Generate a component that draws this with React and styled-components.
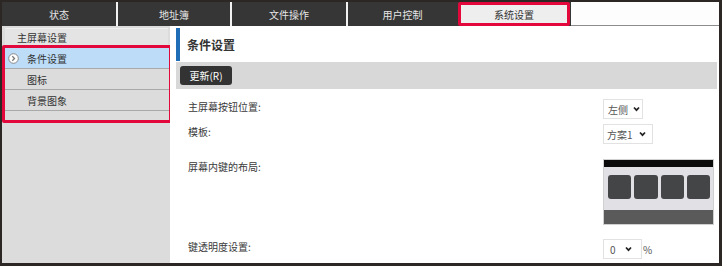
import React from "react";
import styled, { createGlobalStyle } from "styled-components";

const Global = createGlobalStyle`
  html, body { margin: 0; padding: 0; background: #fff; }
  body { font-family: "Noto Sans CJK SC", "Noto Sans", sans-serif; }
  * { box-sizing: border-box; }
`;

const Frame = styled.div`
  width: 722px;
  height: 266px;
  border-style: solid;
  border-color: #2c2725;
  border-width: 2px 3px 3px 2px;
  display: flex;
  flex-direction: column;
  overflow: hidden;
  background: #fff;
`;

const TabBar = styled.div`
  height: 24px;
  display: flex;
  background: #363636;
  flex-shrink: 0;
`;

const Tab = styled.div`
  width: ${(p) => p.$w}px;
  display: flex;
  align-items: center;
  justify-content: center;
  color: #e6e6e6;
  font-size: 10px;
  border-right: ${(p) => (p.$sep ? "2px solid #f2f2f2" : "none")};
`;

const ActiveTab = styled.div`
  width: 112px;
  margin-left: 1px;
  display: flex;
  align-items: center;
  justify-content: center;
  background: #eeeeee;
  color: #333;
  font-size: 10px;
  border: 3px solid #e2083b;
  border-radius: 2px;
`;

const TabFill = styled.div`
  flex: 1;
  background: #fdfdfd;
  border-bottom: 1px solid #8c8c8c;
  margin-left: 1px;
`;

const Body = styled.div`
  flex: 1;
  display: flex;
  min-height: 0;
`;

const Sidebar = styled.div`
  width: 168px;
  background: #dcdcdc;
  padding: 2px 0 0 0;
  display: flex;
  flex-direction: column;
  flex-shrink: 0;
`;

const SideHeader = styled.div`
  height: 17px;
  margin: 0 2px 0 3px;
  padding-left: 12px;
  display: flex;
  align-items: center;
  background: #e4e4e4;
  border-top: 1px solid #f0f0f0;
  color: #333;
  font-size: 10px;
`;

const Highlight = styled.div`
  border: 3px solid #e2083b;
  border-radius: 2px;
  height: 78px;
  margin-right: -2px;
  display: flex;
  flex-direction: column;
`;

const SideItem = styled.div`
  height: 21px;
  flex-shrink: 0;
  display: flex;
  align-items: center;
  padding-left: 22px;
  position: relative;
  font-size: 10px;
  color: #333;
  background: ${(p) => (p.$active ? "#bcdcf8" : "transparent")};
  border-bottom: 1px solid #a9a9a9;
`;

const ItemIcon = styled.svg`
  position: absolute;
  left: 3px;
  top: 5px;
`;

const Main = styled.div`
  flex: 1;
  padding: 2px 2px 0 6px;
  display: flex;
  flex-direction: column;
  background: #fff;
`;

const Heading = styled.div`
  height: 33px;
  display: flex;
  align-items: center;
  border-left: 4px solid #1e6db6;
  padding-left: 7px;
  font-size: 12px;
  font-weight: bold;
  color: #333;
`;

const Toolbar = styled.div`
  height: 27px;
  margin-top: 1px;
  background: #d8d8d8;
  display: flex;
  align-items: center;
  padding-left: 4px;
`;

const Button = styled.div`
  height: 19px;
  width: 52px;
  background: #333;
  color: #fff;
  border-radius: 3px;
  font-size: 10px;
  display: flex;
  align-items: center;
  justify-content: center;
`;

const Form = styled.div`
  padding: 10px 0 0 12px;
  display: flex;
  flex-direction: column;
`;

const Row = styled.div`
  display: grid;
  grid-template-columns: 415px 1fr;
  margin-top: ${(p) => p.$mt || 0}px;
`;

const Label = styled.div`
  font-size: 10px;
  line-height: 16px;
  color: #3a3a3a;
`;

const Control = styled.div`
  display: flex;
  align-items: center;
  gap: 1px;
`;

const Select = styled.div`
  height: 20px;
  width: ${(p) => p.$w}px;
  border: 1px solid #e2e2e2;
  background: #fff;
  display: flex;
  align-items: center;
  padding: 0 ${(p) => p.$pr}px 0 ${(p) => p.$pl}px;
  font-size: 10px;
  color: #555;
  white-space: nowrap;

  svg {
    margin-left: auto;
    flex-shrink: 0;
  }
`;

const Percent = styled.span`
  font-size: 10px;
  color: #555;
`;

const Preview = styled.div`
  width: 111px;
  height: 66px;
  border: 1px solid #d0d0d0;
  display: flex;
  flex-direction: column;
  background: #e1e1e5;
`;

const PreviewTop = styled.div`
  height: 7px;
  background: #0b0b0b;
`;

const PreviewKeys = styled.div`
  flex: 1;
  display: flex;
  gap: 3px;
  padding: 8px 3px 0 4px;
`;

const Key = styled.div`
  width: 24px;
  height: 24px;
  background: #444546;
  border-radius: 3px;
`;

const PreviewBottom = styled.div`
  height: 14px;
  background: #5a5a5a;
`;

const Chevron = () => (
  <svg width="7" height="6" viewBox="0 0 7 6">
    <polyline points="1,1.5 3.5,4.2 6,1.5" fill="none" stroke="#222" strokeWidth="1.7" />
  </svg>
);

export default function App() {
  return (
    <>
      <Global />
      <Frame>
        <TabBar>
          <Tab $w={116} $sep>状态</Tab>
          <Tab $w={114} $sep>地址簿</Tab>
          <Tab $w={116} $sep>文件操作</Tab>
          <Tab $w={109}>用户控制</Tab>
          <ActiveTab>系统设置</ActiveTab>
          <TabFill />
        </TabBar>
        <Body>
          <Sidebar>
            <SideHeader>主屏幕设置</SideHeader>
            <Highlight>
              <SideItem $active>
                <ItemIcon width="11" height="11" viewBox="0 0 11 11">
                  <circle cx="5.5" cy="5.5" r="4.8" fill="#fff" stroke="#8a8a8a" strokeWidth="1" />
                  <polyline points="4.3,3.2 6.5,5.5 4.3,7.8" fill="none" stroke="#777" strokeWidth="1.3" />
                </ItemIcon>
                条件设置
              </SideItem>
              <SideItem>图标</SideItem>
              <SideItem>背景图象</SideItem>
            </Highlight>
          </Sidebar>
          <Main>
            <Heading>条件设置</Heading>
            <Toolbar>
              <Button>更新(R)</Button>
            </Toolbar>
            <Form>
              <Row>
                <Label>主屏幕按钮位置:</Label>
                <Control>
                  <Select $w={40} $pl={4} $pr={2}>左侧<Chevron /></Select>
                </Control>
              </Row>
              <Row $mt={5}>
                <Label>模板:</Label>
                <Control>
                  <Select $w={50} $pl={3} $pr={6}>方案1<Chevron /></Select>
                </Control>
              </Row>
              <Row $mt={15}>
                <Label>屏幕内键的布局:</Label>
                <Control>
                  <Preview>
                    <PreviewTop />
                    <PreviewKeys>
                      <Key />
                      <Key />
                      <Key />
                      <Key />
                    </PreviewKeys>
                    <PreviewBottom />
                  </Preview>
                </Control>
              </Row>
              <Row $mt={14}>
                <Label>键透明度设置:</Label>
                <Control>
                  <Select $w={39} $pl={6} $pr={9}>0<Chevron /></Select>
                  <Percent>%</Percent>
                </Control>
              </Row>
            </Form>
          </Main>
        </Body>
      </Frame>
    </>
  );
}
